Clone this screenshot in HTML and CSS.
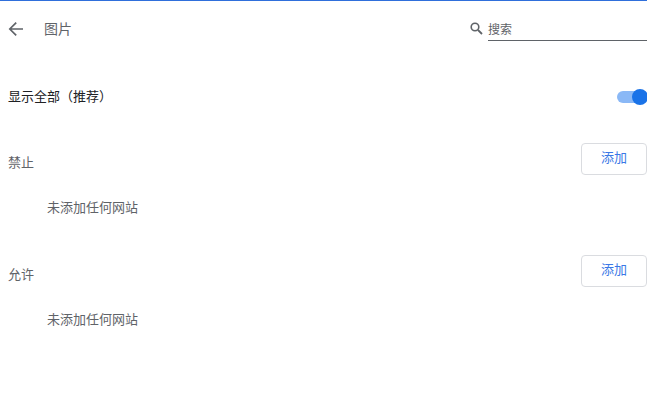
FILE: index.html
```html
<!DOCTYPE html>
<html lang="zh-CN">
<head>
<meta charset="utf-8">
<title>图片</title>
<link rel="stylesheet" href="styles.css">
</head>
<body>
<header class="topbar">
  <div class="nav">
    <svg class="back" width="16" height="16" viewBox="0 0 16 16"><path d="M15 8H2.5M8.2 1.6 1.8 8l6.4 6.4" fill="none" stroke="#5f6368" stroke-width="1.7"/></svg>
    <span class="title">图片</span>
  </div>
  <div class="search">
    <svg class="glass" width="13" height="13" viewBox="0 0 13 13"><circle cx="5" cy="5" r="3.8" fill="none" stroke="#5f6368" stroke-width="1.6"/><path d="M8 8l4 4" stroke="#5f6368" stroke-width="1.8"/></svg>
    <span class="search-field">搜索</span>
  </div>
</header>
<section class="show-all">
  <span class="show-label">显示全部（推荐）</span>
  <span class="toggle"><span class="track"></span><span class="knob"></span></span>
</section>
<section class="group group-block">
  <div class="group-head"><span class="group-label">禁止</span><button class="add">添加</button></div>
  <div class="empty">未添加任何网站</div>
</section>
<section class="group group-allow">
  <div class="group-head"><span class="group-label">允许</span><button class="add">添加</button></div>
  <div class="empty">未添加任何网站</div>
</section>
</body>
</html>
```
FILE: styles.css
```css
* { box-sizing: border-box; }
html, body { margin: 0; padding: 0; }
body {
  width: 647px;
  height: 410px;
  overflow: hidden;
  background: #fff;
  border-top: 1px solid #2f6fdb;
  font-family: "Noto Sans CJK SC", "Liberation Sans", sans-serif;
  font-size: 13px;
  color: #5f6368;
}
.topbar {
  height: 55px;
  display: flex;
  align-items: center;
  justify-content: space-between;
}
.nav { display: flex; align-items: center; padding-left: 8px; }
.back { display: block; }
.title { margin-left: 20px; padding-bottom: 2px; font-size: 14px; line-height: 16px; }
.search { display: flex; align-items: center; width: 177px; }
.glass { display: block; margin-right: 5px; }
.search-field {
  flex: 1;
  height: 24px;
  font-size: 12px;
  line-height: 24px;
  border-bottom: 1px solid #5f6368;
}
.show-all {
  height: 26px;
  margin-top: 28px;
  display: flex;
  align-items: center;
  justify-content: space-between;
  padding-left: 8px;
}
.show-label { color: #202124; position: relative; top: -2px; }
.toggle { position: relative; display: block; width: 30px; height: 16px; }
.track {
  position: absolute;
  left: 0;
  top: 2px;
  width: 28px;
  height: 12px;
  border-radius: 6px;
  background: #8ab8f6;
}
.knob {
  position: absolute;
  left: 15px;
  top: 0;
  width: 16px;
  height: 16px;
  border-radius: 50%;
  background: #1a73e8;
}
.group-block { margin-top: 33px; }
.group-allow { margin-top: 39px; }
.group-head {
  height: 32px;
  display: flex;
  align-items: center;
  justify-content: space-between;
  padding-left: 8px;
}
.group-label { position: relative; top: 2px; }
.add {
  width: 66px;
  height: 32px;
  padding: 0 0 6px;
  background: #fff;
  border: 1px solid #dadce0;
  border-radius: 4px;
  color: #3a78e6;
  font: inherit;
}
.empty { margin-top: 23px; padding-left: 47px; line-height: 18px; }
```
